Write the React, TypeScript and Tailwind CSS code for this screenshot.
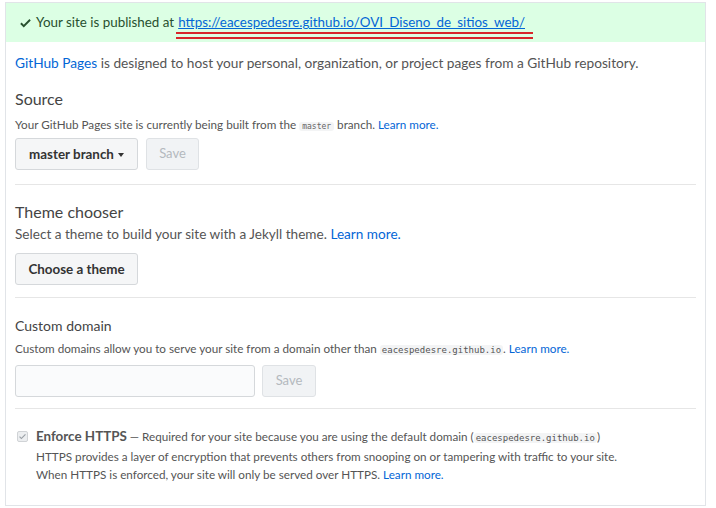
export default function App() {
  return (
    <div className="h-[508px] w-[716px] bg-white pl-[5px] pt-[2px] font-['Lato',sans-serif] text-[#333]">
      <div className="w-[701px] border border-[#e1e4e8]">
        {/* Published banner */}
        <div className="relative flex h-[39px] items-center bg-[#dcffe4] pl-[14px] text-[13.4px] text-[#28502f]">
          <svg viewBox="0 0 12 16" className="mr-[5px] h-[14px] w-[11px] fill-[#28502f]">
            <path d="M12 5l-8 8-4-4 1.5-1.5L4 10l6.5-6.5L12 5z" />
          </svg>
          <span>Your site is published at</span>
          <span className="relative ml-[4px] text-[#0366d6] underline">
            https://eacespedesre.github.io/OVI_Diseno_de_sitios_web/
            <span className="absolute left-[-2px] right-[-8px] top-[20px] h-[2px] bg-[#d8262b]" />
            <span className="absolute left-[-2px] right-[-8px] top-[25px] h-[2px] bg-[#d8262b]" />
          </span>
        </div>

        <div className="px-[9px]">
          <p className="pb-[10px] pt-[11px] text-[13.7px] text-[#555]">
            <span className="text-[#0366d6]">GitHub Pages</span> is designed to host your personal,
            organization, or project pages from a GitHub repository.
          </p>

          {/* Source */}
          <div className="border-b border-[#e6e6e6] pb-[14px] pt-[4px]">
            <h3 className="text-[16px] leading-[22px] text-[#444]">Source</h3>
            <p className="mt-[6px] text-[11.7px] text-[#555]">
              Your GitHub Pages site is currently being built from the{" "}
              <code className="rounded-[3px] bg-[#f3f4f5] px-[3px] font-['DejaVu_Sans_Mono',monospace] text-[8px] text-[#666]">
                master
              </code>{" "}
              branch. <span className="text-[#0366d6]">Learn more.</span>
            </p>
            <div className="mt-[5px] flex gap-[8px]">
              <div className="flex h-[32px] w-[123px] items-center justify-center gap-[4px] rounded-[3px] border border-[#d5d8db] bg-[#f5f6f7] text-[13.4px] font-bold text-[#333]">
                master branch
                <span className="mt-[1px] border-x-[3.5px] border-t-[4px] border-x-transparent border-t-[#333]" />
              </div>
              <div className="flex h-[32px] w-[53px] items-center justify-center rounded-[3px] border border-[#dfe2e5] bg-[#f1f3f5] text-[13px] text-[#b4b9be]">
                Save
              </div>
            </div>
          </div>

          {/* Theme chooser */}
          <div className="border-b border-[#e6e6e6] pb-[12px] pt-[16px]">
            <h3 className="text-[16px] leading-[22px] text-[#444]">Theme chooser</h3>
            <p className="mt-[1px] text-[13.6px] text-[#555]">
              Select a theme to build your site with a Jekyll theme.{" "}
              <span className="text-[#0366d6]">Learn more.</span>
            </p>
            <div className="mt-[9px] flex h-[32px] w-[123px] items-center justify-center rounded-[3px] border border-[#d5d8db] bg-[#f5f6f7] text-[13.4px] font-bold text-[#333]">
              Choose a theme
            </div>
          </div>

          {/* Custom domain */}
          <div className="border-b border-[#e6e6e6] pb-[11px] pt-[18px]">
            <h3 className="text-[14px] leading-[20px] text-[#444]">Custom domain</h3>
            <p className="mt-[4px] text-[11.7px] text-[#555]">
              Custom domains allow you to serve your site from a domain other than{" "}
              <code className="rounded-[3px] bg-[#f3f4f5] px-[2px] font-['DejaVu_Sans_Mono',monospace] text-[9px] text-[#555]">
                eacespedesre.github.io
              </code>
              . <span className="text-[#0366d6]">Learn more.</span>
            </p>
            <div className="mt-[7px] flex gap-[7px]">
              <div className="h-[32px] w-[240px] rounded-[3px] border border-[#d5d8db] bg-[#fafbfc]" />
              <div className="flex h-[32px] w-[54px] items-center justify-center rounded-[3px] border border-[#dfe2e5] bg-[#f1f3f5] text-[13px] text-[#b4b9be]">
                Save
              </div>
            </div>
          </div>

          {/* Enforce HTTPS */}
          <div className="flex gap-[8px] pb-[22px] pt-[18px]">
            <div className="ml-[2px] mt-[4px] flex h-[11px] w-[11px] items-center justify-center rounded-[2px] border border-[#d0d3d6] bg-[#eceef0]">
              <svg viewBox="0 0 12 16" className="h-[9px] w-[7px] fill-[#9aa0a6]">
                <path d="M12 5l-8 8-4-4 1.5-1.5L4 10l6.5-6.5L12 5z" />
              </svg>
            </div>
            <div className="text-[11.7px] leading-[18px] text-[#555]">
              <p>
                <span className="text-[13.4px] font-bold text-[#555]">Enforce HTTPS</span> — Required for
                your site because you are using the default domain (
                <code className="rounded-[3px] bg-[#f3f4f5] px-[2px] font-['DejaVu_Sans_Mono',monospace] text-[9px]">
                  eacespedesre.github.io
                </code>
                )
              </p>
              <p>
                HTTPS provides a layer of encryption that prevents others from snooping on or tampering
                with traffic to your site.
              </p>
              <p>
                When HTTPS is enforced, your site will only be served over HTTPS.{" "}
                <span className="text-[#0366d6]">Learn more.</span>
              </p>
            </div>
          </div>
        </div>
      </div>
    </div>
  );
}
